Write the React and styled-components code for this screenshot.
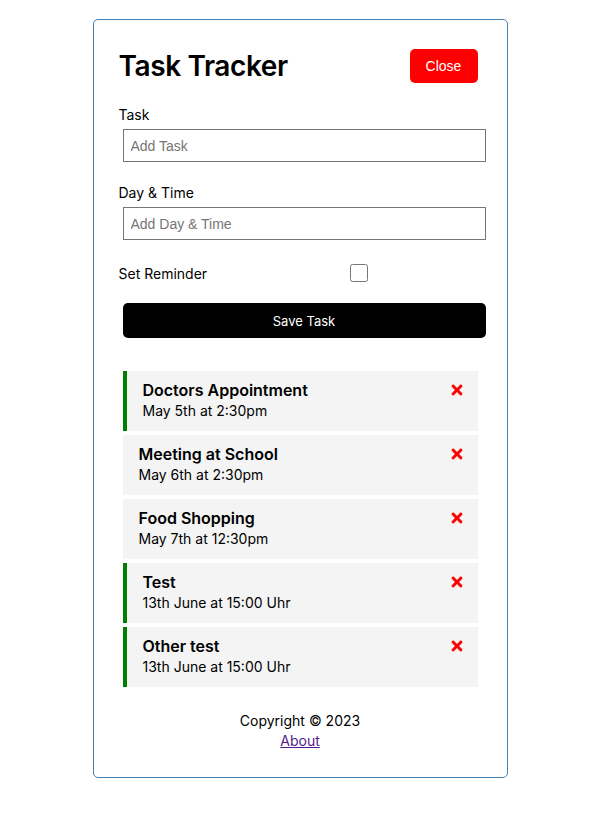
import React from "react";
import styled, { createGlobalStyle } from "styled-components";
import { FaTimes } from "react-icons/fa";

const tasks = [
  { id: 1, text: "Doctors Appointment", day: "May 5th at 2:30pm", reminder: true },
  { id: 2, text: "Meeting at School", day: "May 6th at 2:30pm", reminder: false },
  { id: 3, text: "Food Shopping", day: "May 7th at 12:30pm", reminder: false },
  { id: 4, text: "Test", day: "13th June at 15:00 Uhr", reminder: true },
  { id: 5, text: "Other test", day: "13th June at 15:00 Uhr", reminder: true },
];

const GlobalStyle = createGlobalStyle`
  * {
    box-sizing: border-box;
  }

  body {
    margin: 0;
    background: #fff;
    font-family: "Inter", "Liberation Sans", sans-serif;
    color: #000;
  }
`;

const App = () => {
  return (
    <>
      <GlobalStyle />
      <Container>
        <Header>
          <Title>Task Tracker</Title>
          <CloseBtn>Close</CloseBtn>
        </Header>

        <Form>
          <FormControl>
            <Label>Task</Label>
            <Input type="text" placeholder="Add Task" />
          </FormControl>
          <FormControl>
            <Label>Day &amp; Time</Label>
            <Input type="text" placeholder="Add Day & Time" />
          </FormControl>
          <CheckRow>
            <CheckLabel>Set Reminder</CheckLabel>
            <CheckCell>
              <Checkbox type="checkbox" />
            </CheckCell>
          </CheckRow>
          <SaveBtn type="button">Save Task</SaveBtn>
        </Form>

        <TaskList>
          {tasks.map((task) => (
            <Task key={task.id} $reminder={task.reminder}>
              <TaskTitle>
                {task.text}
                <FaTimes style={{ color: "red", cursor: "pointer" }} />
              </TaskTitle>
              <TaskDay>{task.day}</TaskDay>
            </Task>
          ))}
        </TaskList>

        <Footer>
          <FooterText>Copyright &copy; 2023</FooterText>
          <AboutLink href="#about">About</AboutLink>
        </Footer>
      </Container>
    </>
  );
};

const Container = styled.div`
  width: 415px;
  margin: 19px auto 0;
  padding: 25px 25px 26px;
  border: 1px solid steelblue;
  border-radius: 5px;
`;

const Header = styled.header`
  display: flex;
  justify-content: space-between;
  align-items: center;
  height: 42px;
  margin-bottom: 17px;
`;

const Title = styled.h1`
  margin: 0;
  font-size: 28px;
  font-weight: 600;
  letter-spacing: -0.4px;
`;

const CloseBtn = styled.button`
  margin: 4px;
  width: 68px;
  height: 34px;
  border: none;
  border-radius: 5px;
  background: red;
  color: #fff;
  font-family: "Liberation Sans", Arial, sans-serif;
  font-size: 14px;
  cursor: pointer;
`;

const Form = styled.form`
  margin-bottom: 29px;
`;

const FormControl = styled.div`
  margin-bottom: 20px;
`;

const Label = styled.label`
  display: block;
  font-size: 14px;
  line-height: 21px;
`;

const Input = styled.input`
  display: block;
  width: 100%;
  height: 33px;
  margin: 4px;
  padding: 3px 7px;
  border: 1px solid #767676;
  font-family: "Liberation Sans", Arial, sans-serif;
  font-size: 14px;

  &::placeholder {
    color: #757575;
  }
`;

const CheckRow = styled.div`
  display: flex;
  align-items: center;
  height: 18px;
  margin-top: 24px;
`;

const CheckLabel = styled(Label)`
  flex: 1;
`;

const CheckCell = styled.div`
  flex: 2;
  display: flex;
  justify-content: center;
  margin: 0 4px;
`;

const Checkbox = styled.input`
  width: 18px;
  height: 18px;
  margin: 0;
`;

const SaveBtn = styled.button`
  display: block;
  width: 100%;
  height: 35px;
  margin: 21px 4px 4px;
  border: none;
  border-radius: 5px;
  background: #000;
  color: #fff;
  font-family: inherit;
  font-size: 13px;
  cursor: pointer;
`;

const TaskList = styled.div`
  display: flex;
  flex-direction: column;
  gap: 4px;
  padding: 4px;
`;

const Task = styled.div`
  height: 60px;
  padding: 9px 13px 10px 16px;
  background: #f4f4f4;
  border-left: ${(props) => (props.$reminder ? "4px solid green" : "none")};
  cursor: pointer;
`;

const TaskTitle = styled.h3`
  display: flex;
  justify-content: space-between;
  align-items: center;
  margin: 0;
  font-size: 16px;
  font-weight: 600;
  line-height: 20px;
`;

const TaskDay = styled.p`
  margin: 0;
  font-size: 14px;
  line-height: 21px;
`;

const Footer = styled.footer`
  margin-top: 20px;
  text-align: center;
  font-size: 14px;
  line-height: 20px;
`;

const FooterText = styled.p`
  margin: 0;
`;

const AboutLink = styled.a`
  color: #551a8b;
  text-decoration: underline;
`;

export default App;
